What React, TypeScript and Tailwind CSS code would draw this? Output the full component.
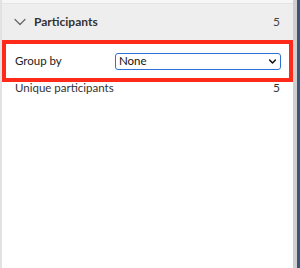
const FONT = "font-['Lato','Noto_Sans',sans-serif]";

function ChevronDown({ className, weight = 1.2 }: { className?: string; weight?: number }) {
  return (
    <svg viewBox="0 0 12 8" className={className} fill="none" aria-hidden>
      <path d="M1 1.5L6 6.5L11 1.5" stroke="currentColor" strokeWidth={weight} strokeLinecap="round" strokeLinejoin="round" />
    </svg>
  );
}

export default function App() {
  return (
    <div className={`flex h-[268px] w-[300px] overflow-hidden bg-white text-[#333] ${FONT}`}>
      <div className="flex flex-1 flex-col border-l-[2px] border-[#e2e2e2] bg-white">
        <div className="h-[4px] border-b border-[#e4e4e4] bg-[#f6f6f6]" />
        <div className="flex h-[36px] items-center bg-[#eeeeee] pl-[12px] pr-[13px]">
          <ChevronDown className="h-[8px] w-[12px] text-[#666]" />
          <span className="ml-[8px] text-[12px] font-bold text-[#333]">Participants</span>
          <span className="ml-auto text-[12px] text-[#444]">5</span>
        </div>
        <div className="flex h-[42px] items-center border-4 border-[#ff2a1a] bg-white pl-[9px] pr-[8px]">
          <span className="w-[100px] text-[11.5px] text-[#222]">Group by</span>
          <div className="flex h-[17px] flex-1 items-center rounded-[3px] border-[1.5px] border-[#2f6fd8] bg-white pl-[3px] pr-[4px]">
            <span className="text-[11.5px] leading-none text-[#111]">None</span>
            <ChevronDown className="ml-auto h-[5px] w-[7px] text-[#111]" weight={2.6} />
          </div>
        </div>
        <div className="flex h-[12px] items-center pl-[13px] pr-[13px]">
          <span className="text-[11.5px] text-[#333]">Unique participants</span>
          <span className="ml-auto text-[12px] text-[#333]">5</span>
        </div>
      </div>
      <div className="w-[4px] bg-[#cfcfcf]" />
      <div className="w-[3px] bg-[#3a5676]" />
    </div>
  );
}
